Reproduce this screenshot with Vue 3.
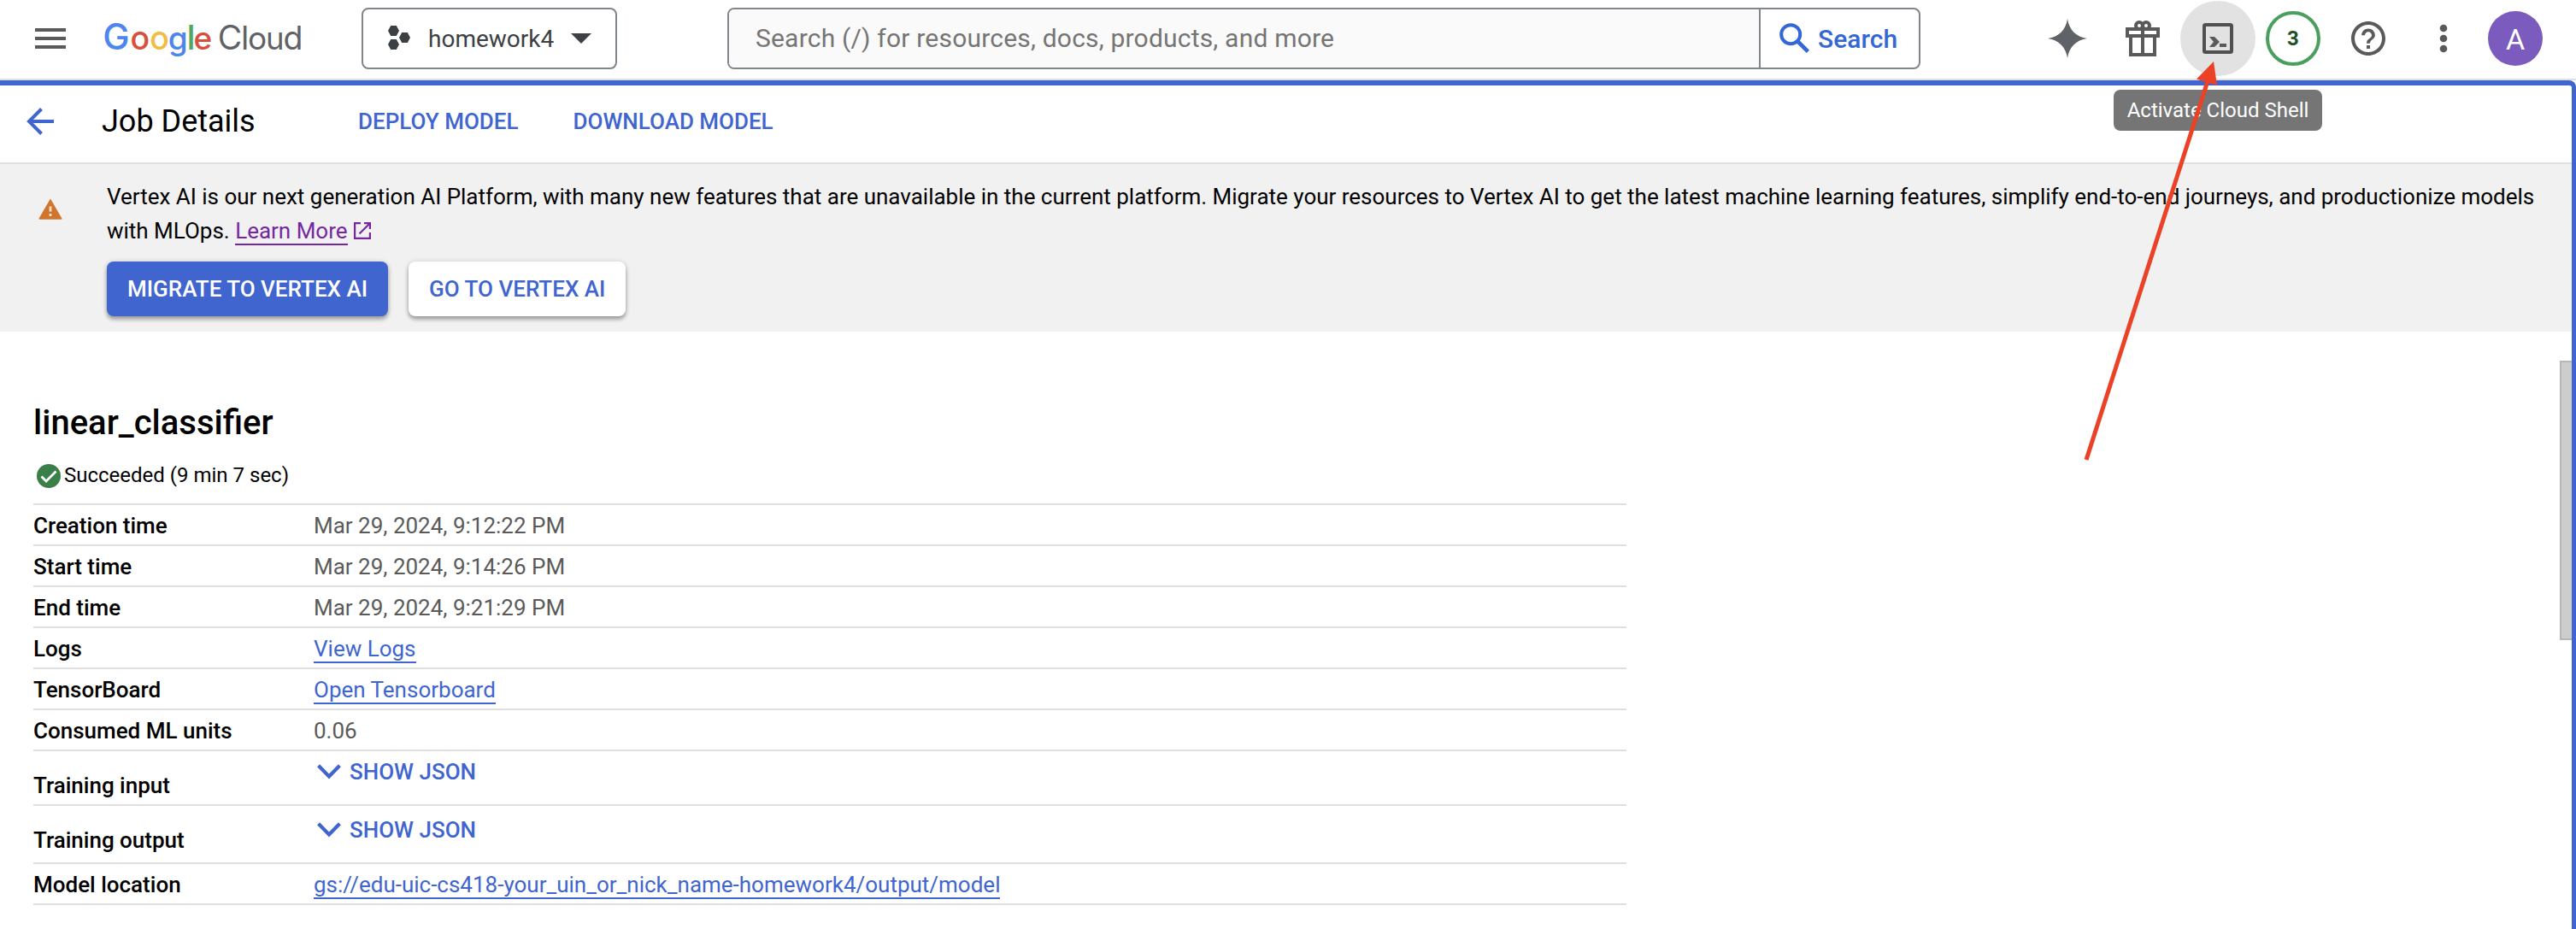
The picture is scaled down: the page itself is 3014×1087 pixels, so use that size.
<script setup>
const logoLetters = [
  { ch: 'G', x: 0.3, size: 42, color: '#4e86f0', weight: 500 },
  { ch: 'o', x: 32.6, size: 37.5, color: '#d84f3e', weight: 550 },
  { ch: 'o', x: 55.2, size: 37.5, color: '#f1bd42', weight: 550 },
  { ch: 'g', x: 76.7, size: 37, color: '#4e86f0', weight: 550 },
  { ch: 'l', x: 98.4, size: 40, color: '#55a85a', weight: 550 },
  { ch: 'e', x: 106.6, size: 37, color: '#d84f3e', weight: 550 },
  { ch: 'C', x: 134.7, size: 39, color: '#5f6368', weight: 400 },
  { ch: 'l', x: 161.9, size: 38.5, color: '#5f6368', weight: 400 },
  { ch: 'o', x: 169.9, size: 37, color: '#5f6368', weight: 400 },
  { ch: 'u', x: 191.1, size: 36.5, color: '#5f6368', weight: 400 },
  { ch: 'd', x: 211.5, size: 37.5, color: '#5f6368', weight: 400 }
]

const rows = [
  { label: 'Creation time', text: 'Mar 29, 2024, 9:12:22 PM' },
  { label: 'Start time', text: 'Mar 29, 2024, 9:14:26 PM' },
  { label: 'End time', text: 'Mar 29, 2024, 9:21:29 PM' },
  { label: 'Logs', link: 'View Logs' },
  { label: 'TensorBoard', link: 'Open Tensorboard' },
  { label: 'Consumed ML units', text: '0.06' },
  { label: 'Training input', json: true, kind: 'input' },
  { label: 'Training output', json: true, kind: 'output' },
  { label: 'Model location', link: 'gs://edu-uic-cs418-your_uin_or_nick_name-homework4/output/model' }
]
</script>

<template>
  <div class="page">
    <header class="topbar">
      <svg class="menu" width="36" height="24" viewBox="0 0 36 24" fill="#5a5a5a">
        <path d="M0 0h36v4H0zM0 10h36v4H0zM0 20h36v4H0z" />
      </svg>
      <svg class="logo" width="240" height="60" viewBox="0 0 240 60">
        <text y="42.500">
          <tspan
            v-for="(l, i) in logoLetters"
            :key="i"
            :x="l.x"
            :font-size="l.size"
            :font-weight="l.weight"
            :fill="l.color"
          >{{ l.ch }}</tspan>
        </text>
      </svg>
      <div class="project">
        <svg width="26" height="28" viewBox="0 0 26 28" fill="#3c4043">
          <path d="M3.2 0h6.6L13 6l-3.2 6H3.2L0 6zM16.2 8h6.6l3.2 6-3.2 6h-6.6L13 14zM3.2 16h6.6l3.2 6-3.2 6H3.2L0 22z" />
        </svg>
        <span class="project-name">homework4</span>
        <svg width="24" height="12" viewBox="0 0 24 12" fill="#3c4043"><path d="M0 0h24L12 12z" /></svg>
      </div>
      <div class="search">
        <div class="search-field">Search (/) for resources, docs, products, and more</div>
        <div class="search-button">
          <svg width="36" height="36" viewBox="0 0 36 36" fill="none" stroke="#3367d6" stroke-width="4">
            <circle cx="13.2" cy="13.2" r="11" />
            <path d="M21 21l12.4 12.4" stroke-width="4.6" />
          </svg>
          <span>Search</span>
        </div>
      </div>
      <div class="tools">
        <div class="slot">
          <svg width="46" height="46" viewBox="0 0 46 46" fill="#5f6368">
            <path d="M23 0C25 13 33 21 46 23C33 25 25 33 23 46C21 33 13 25 0 23C13 21 21 13 23 0z" />
          </svg>
        </div>
        <div class="slot">
          <svg width="40" height="44" viewBox="0 0 40 44" fill="none" stroke="#5a5a5a" stroke-width="4">
            <path d="M2 11h36v8H2zM6 19v22h28V19M20 11v30" />
            <circle cx="16" cy="7" r="4" />
            <circle cx="24" cy="7" r="4" />
          </svg>
        </div>
        <div class="slot">
          <div class="shell">
            <svg width="36" height="36" viewBox="0 0 36 36" fill="#5a5a5a">
              <rect x="2" y="2" width="32" height="32" rx="1.500" fill="none" stroke="#505050" stroke-width="4" />
              <path d="M8 16h6l6 6-6 6H8l5-6zM20 24h8v4h-8z" />
            </svg>
            <div class="tooltip">Activate Cloud Shell</div>
          </div>
        </div>
        <div class="slot"><div class="count">3</div></div>
        <div class="slot">
          <svg width="40" height="40" viewBox="0 0 24 24" fill="#5a5a5a">
            <path d="M12 0C5.370 0 0 5.370 0 12s5.370 12 12 12 12-5.370 12-12S18.630 0 12 0zm0 21.600c-5.300 0-9.600-4.300-9.600-9.600S6.700 2.400 12 2.400s9.600 4.300 9.600 9.600-4.300 9.600-9.600 9.600zM12 5.100c-2.700 0-4.750 2-4.750 4.700h2.350c0-1.300 1.070-2.400 2.400-2.400s2.400 1.100 2.400 2.400c0 2.300-3.600 2.150-3.600 5.700h2.350c0-2.500 3.600-3 3.600-5.700 0-2.700-2.100-4.700-4.750-4.700z" />
            <path d="M10.800 16.800h2.400v2.400h-2.400z" />
          </svg>
        </div>
        <div class="slot">
          <svg width="10" height="34" viewBox="0 0 10 34" fill="#5a5a5a">
            <circle cx="5" cy="5" r="4.300" /><circle cx="5" cy="17" r="4.300" /><circle cx="5" cy="29" r="4.300" />
          </svg>
        </div>
        <div class="avatar">A</div>
      </div>
    </header>

    <main class="panel">
      <div class="heading">
        <svg class="back" width="32" height="32" viewBox="0 0 32 32" fill="none" stroke="#4065cf" stroke-width="4">
          <path d="M32 16H3M17.500 1.500L3 16l14.500 14.500" />
        </svg>
        <h1>Job Details</h1>
        <a class="action">DEPLOY MODEL</a>
        <a class="action">DOWNLOAD MODEL</a>
      </div>

      <section class="banner">
        <svg class="warn" width="28" height="25" viewBox="0 0 28 25">
          <path d="M14 0.500L27.400 23.500q.4 1.200-.8 1.200H1.400q-1.200 0-.8-1.200z" fill="#d0752b" />
          <path d="M12.600 9.500h2.800v6h-2.800zM12.600 18h2.800v3h-2.800z" fill="#f6e3d3" />
        </svg>
        <div class="banner-body">
          <p>
            Vertex AI is our next generation AI Platform, with many new features that are unavailable in the current platform. Migrate your resources to Vertex AI to get the latest machine learning features, simplify end-to-end journeys, and productionize models<br />with MLOps. <a class="learn">Learn More</a><svg class="ext" width="20" height="20" viewBox="0 0 20 20" fill="none" stroke="#7627a0" stroke-width="2.200">
              <path d="M8 1.100H1.100v17.800h17.800V12M12 1.100h6.900V8M18.500 1.500L6.500 13.500" />
            </svg>
          </p>
          <div class="buttons">
            <button class="btn primary">MIGRATE TO VERTEX AI</button>
            <button class="btn">GO TO VERTEX AI</button>
          </div>
        </div>
      </section>

      <section class="details">
        <h2>linear_classifier</h2>
        <div class="status">
          <svg width="28" height="28" viewBox="0 0 28 28">
            <circle cx="14" cy="14" r="14" fill="#3a7f48" />
            <path d="M5.500 14.500l5.500 5.500L22.500 8.500" fill="none" stroke="#fff" stroke-width="2.800" />
          </svg>
          <span>Succeeded (9 min 7 sec)</span>
        </div>
        <div class="table">
          <div v-for="row in rows" :key="row.label" class="row" :class="row.kind">
            <div class="label">{{ row.label }}</div>
            <a v-if="row.link" class="link">{{ row.link }}</a>
            <div v-else-if="row.json" class="json">
              <svg width="28" height="18" viewBox="0 0 28 18" fill="none" stroke="#4065cf" stroke-width="4.200">
                <path d="M1.600 1.700L14 14.500 26.400 1.700" />
              </svg>
              <span>SHOW JSON</span>
            </div>
            <div v-else class="value">{{ row.text }}</div>
          </div>
        </div>
      </section>
      <div class="scroll-thumb"></div>
    </main>

    <svg class="arrow" width="170" height="480" viewBox="0 0 170 480">
      <path d="M11 468L153 25" stroke="#eb4127" stroke-width="5" />
      <path d="M160 2l4 28-24-7.500z" fill="#eb4127" />
    </svg>
  </div>
</template>

<style>
body { margin: 0; background: #fff; }
</style>

<style scoped>
.page {
  position: relative;
  width: 3014px;
  height: 1087px;
  overflow: hidden;
  display: flex;
  flex-direction: column;
  font-family: Roboto, sans-serif;
  font-size: 26px;
  color: #000;
  background: #fff;
}
svg { display: block; flex: none; }
.topbar {
  display: flex;
  align-items: center;
  flex: none;
  height: 90px;
  padding-bottom: 2px;
  border-bottom: 2px solid #e0e0e0;
}
.menu { margin-left: 41px; }
.logo { margin-left: 43px; font-family: Inter, sans-serif; }
.project {
  box-sizing: border-box;
  display: flex;
  align-items: center;
  width: 299px;
  height: 72px;
  margin-left: 63px;
  padding-left: 29px;
  border: 2px solid #80868b;
  border-radius: 8px;
  font-size: 28px;
  color: #3c4043;
}
.project svg:first-child { margin-top: -2px; }
.project-name { width: 148px; margin: 0 19px 0 21px; }
.search {
  box-sizing: border-box;
  display: flex;
  width: 1396px;
  height: 72px;
  margin-left: 129px;
  border: 2px solid #80868b;
  border-radius: 8px;
  font-size: 30px;
  overflow: hidden;
}
.search-field {
  flex: 1;
  padding-left: 31px;
  line-height: 68px;
  letter-spacing: 0.2px;
  color: #757575;
  background: #fafafa;
}
.search-button {
  box-sizing: border-box;
  display: flex;
  align-items: center;
  width: 187px;
  padding-left: 22px;
  border-left: 2px solid #80868b;
  color: #3367d6;
  font-weight: 500;
}
.search-button span { margin: 1px 0 0 9px; }
.tools { display: flex; align-items: center; margin-left: auto; margin-right: 39px; }
.slot { display: flex; align-items: center; justify-content: center; width: 88px; height: 88px; }
.shell {
  position: relative;
  display: flex;
  align-items: center;
  justify-content: center;
  width: 88px;
  height: 88px;
  border-radius: 50%;
  background: #e2e2e2;
}
.tooltip {
  position: absolute;
  top: 104px;
  left: -78px;
  z-index: 2;
  width: 244px;
  height: 48px;
  border-radius: 8px;
  background: #757575;
  color: #fff;
  font-size: 24px;
  line-height: 48px;
  text-align: center;
  white-space: nowrap;
}
.count {
  box-sizing: border-box;
  width: 64px;
  height: 64px;
  border: 4px solid #4a9f5f;
  border-radius: 50%;
  font-size: 24px;
  font-weight: 700;
  line-height: 56px;
  text-align: center;
  color: #1e5127;
}
.avatar {
  width: 64px;
  height: 64px;
  margin-left: 8px;
  border-radius: 50%;
  background: #7b5bbd;
  color: #fff;
  font-size: 34px;
  line-height: 66px;
  text-align: center;
}
.panel {
  position: relative;
  flex: 1;
  border-top: 6px solid #4065cf;
  border-right: 5px solid #4065cf;
  border-top-right-radius: 8px;
}
.heading {
  display: flex;
  align-items: center;
  height: 84px;
  padding-bottom: 6px;
  border-bottom: 2px solid #e0e0e0;
}
.back { margin-left: 31px; }
h1 { width: 300px; margin: 0 0 0 56px; font-size: 36px; font-weight: 400; }
.action { margin-right: 64px; color: #4065cf; font-weight: 500; }
.banner { display: flex; height: 196px; background: #f1f1f1; }
.warn { margin: 40px 52px 0 45px; }
.banner-body { padding-top: 18px; }
p { margin: 0; line-height: 40px; letter-spacing: -0.007px; white-space: nowrap; }
.learn {
  display: inline-block;
  line-height: 30px;
  border-bottom: 2px solid #7627a0;
  color: #7627a0;
}
.ext { display: inline-block; margin-left: 7px; vertical-align: -1px; }
.buttons { display: flex; gap: 24px; margin-top: 16px; }
.btn {
  height: 64px;
  padding: 0 24px;
  border: 0;
  border-radius: 8px;
  background: #fff;
  color: #4065cf;
  font: 500 26px Roboto, sans-serif;
  box-shadow: 0 4px 4px rgba(0, 0, 0, 0.25), 0 1px 6px rgba(0, 0, 0, 0.2);
}
.btn.primary { background: #4065cf; color: #fff; }
.details { width: 1864px; padding: 82px 0 0 39px; }
h2 { margin: 0; font-size: 40px; font-weight: 500; line-height: 50px; }
.status {
  display: flex;
  align-items: center;
  height: 28px;
  margin-top: 23px;
  padding-left: 4px;
  font-size: 24px;
}
.status span { margin: -3px 0 0 4px; }
.table { margin-top: 18px; border-bottom: 2px solid #e0e0e0; }
.row {
  box-sizing: border-box;
  display: flex;
  align-items: flex-start;
  height: 48px;
  padding-top: 9px;
  border-top: 2px solid #e0e0e0;
  line-height: 30px;
}
.label { width: 328px; font-weight: 500; }
.value { color: #5a5a5a; }
.link { border-bottom: 2px solid #4065cf; color: #4065cf; }
.row.input { height: 64px; }
.row.output { height: 68px; padding-top: 13px; }
.row.input .label { padding-top: 16px; }
.row.output .label { padding-top: 12px; }
.json { display: flex; color: #4065cf; font-weight: 500; }
.json svg { margin: 6px 10px 0 4px; }
.scroll-thumb {
  position: absolute;
  top: 322px;
  right: 0;
  box-sizing: border-box;
  width: 14px;
  height: 327px;
  border: 2px solid #b7b7b7;
  border-right: 0;
  background: #cdcdcd;
}
.arrow { position: absolute; left: 2430px; top: 70px; z-index: 3; }
</style>
